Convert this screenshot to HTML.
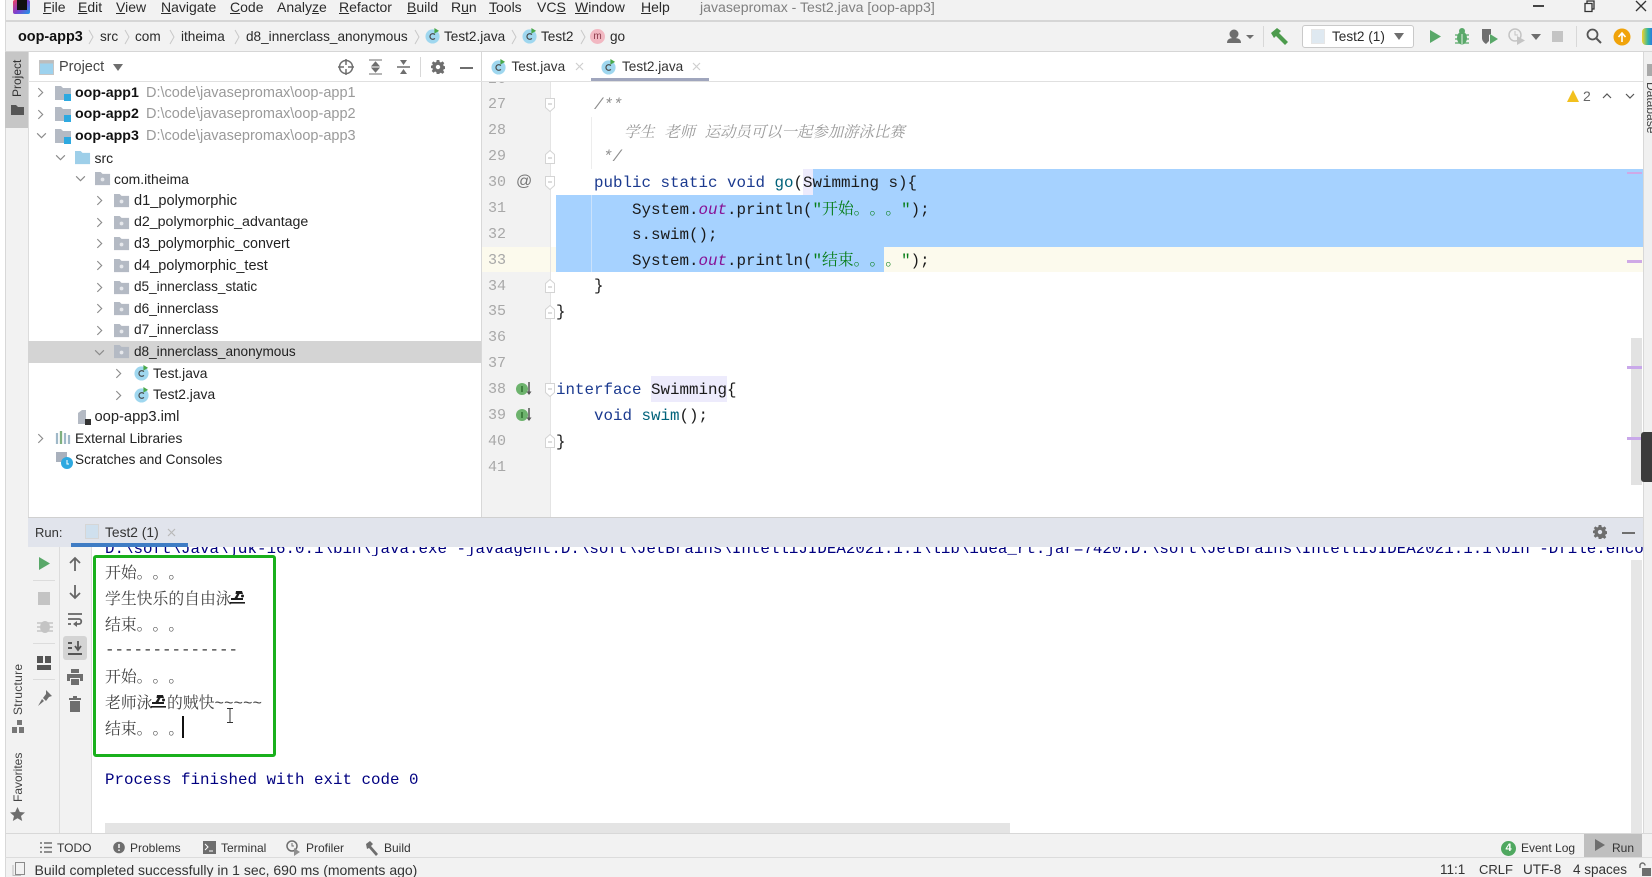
<!DOCTYPE html>
<html><head><meta charset="utf-8"><title>Test2.java</title>
<style>
html,body{margin:0;padding:0;width:1652px;height:877px;overflow:hidden;background:#fff}
#r{position:relative;width:1652px;height:877px;overflow:hidden;background:#fff;font-family:"Liberation Sans","Noto Sans CJK SC",sans-serif;color:#222;filter:blur(.35px);text-spacing-trim:space-all}
.a{position:absolute}
.t{position:absolute;white-space:pre;line-height:22px;font-size:14px;height:22px}
.m{position:absolute;top:-3px;white-space:pre;line-height:20px;font-size:14px;color:#2a2a2a}
.n{position:absolute;top:26px;white-space:pre;line-height:22px;font-size:13.6px;color:#2a2a2a}
.c{position:absolute;white-space:pre;font-family:"Liberation Mono","Noto Serif CJK SC",monospace;font-size:15.83px;line-height:26px;height:26px;color:#1a1a1a}
.ln{position:absolute;left:488px;font-family:"Liberation Mono",monospace;font-size:15px;line-height:26px;color:#a8a8a8}
.k{color:#1b3a8f}.f{color:#00627a}.o{color:#871094;font-style:italic}.s{color:#067d17}
.cn{font-family:"Noto Serif CJK SC","Liberation Mono",serif}
.con{position:absolute;left:105px;white-space:pre;font-family:"Liberation Mono","Noto Serif CJK SC",monospace;font-size:15.83px;line-height:26px;color:#444}
.b{position:absolute;white-space:pre;font-size:12px;line-height:18px;top:839px;color:#333}
.st{position:absolute;white-space:pre;font-size:13.5px;line-height:18px;top:860.5px;color:#333}
svg{position:absolute;overflow:visible}
.v{position:absolute;transform-origin:0 0;transform:rotate(-90deg);white-space:pre;font-size:12px;line-height:14px;color:#444}
.pa{color:#9a9a9a;font-size:14.5px;left:146px}
.bd{font-weight:bold;color:#111;font-size:14.2px;left:75px}
</style></head><body><div id="r">
<svg width="0" height="0" style="position:absolute"><defs>
<symbol id="mod" viewBox="0 0 17 17"><path d="M0 1h6l2 2h8v12H0z" fill="#b4bac4"/><rect x="9" y="9" width="7" height="7" fill="#2ea9e0"/></symbol>
<symbol id="src" viewBox="0 0 17 17"><path d="M0 1h6l2 2h8v12H0z" fill="#9ecfe9"/></symbol>
<symbol id="pk" viewBox="0 0 17 17"><path d="M0 1h6l2 2h8v12H0z" fill="#b4bac4"/><circle cx="8" cy="9" r="2" fill="#e6e8ec"/></symbol>
<symbol id="cl" viewBox="0 0 17 17"><circle cx="8" cy="9" r="7.500" fill="#9fd7ef"/><path d="M10.500 7a3 3 0 1 0 0 4" fill="none" stroke="#444" stroke-width="1.200"/><path d="M10 0v6l5-3z" fill="#4aa84a"/></symbol>
<symbol id="hat" viewBox="0 0 15 14"><path d="M6 1h6l1 3H9.500L7.500 8H13v2H1V8h3.500L7 4H5.500z" fill="#1d1d1d"/><circle cx="12.500" cy="6" r="1.500" fill="#1d1d1d"/><path d="M0 12h15v1.600H0z" fill="#1d1d1d"/></symbol>
<symbol id="gear" viewBox="0 0 16 16"><path d="M6.500 0h3l.4 2.200 1.400.6L13.200 1.500l2 2-1.300 1.900.6 1.400 2.200.4v3l-2.200.4-.6 1.400 1.300 1.900-2 2-1.900-1.300-1.400.6L9.500 16h-3l-.4-2.200-1.400-.6-1.900 1.300-2-2 1.300-1.900-.6-1.400L-.7 9.500v-3l2.200-.4.600-1.400L.8 3.500l2-2 1.900 1.300 1.400-.6zM8 5.500a2.500 2.500 0 1 0 0 5 2.500 2.500 0 0 0 0-5z" fill="#6e6e6e" fill-rule="evenodd"/></symbol>
<symbol id="fold" viewBox="0 0 10 14"><path d="M.5.500h9v9L5 13.500.5 9.500z" fill="#fff" stroke="#d4d4d4"/><path d="M3 6h4" stroke="#bbb"/></symbol>
<symbol id="foldb" viewBox="0 0 10 14"><path d="M.5 13.500h9v-9L5 .5.500 4.500z" fill="#fff" stroke="#d4d4d4"/><path d="M3 8h4" stroke="#bbb"/></symbol>
<symbol id="ch" viewBox="0 0 8 12"><path d="M1.500 1l5 5-5 5" fill="none" stroke="#8a8a8a" stroke-width="1.300"/></symbol>
<symbol id="chd" viewBox="0 0 12 8"><path d="M1 1.500l5 5 5-5" fill="none" stroke="#8a8a8a" stroke-width="1.300"/></symbol>
<symbol id="impl" viewBox="0 0 17 16"><circle cx="6" cy="8" r="6" fill="#6db36d"/><path d="M6 5v6" stroke="#2f6f2f" stroke-width="1.500"/><path d="M13 1v12" stroke="#555" stroke-width="1.500"/><path d="M10.500 10.500L13 14l2.500-3.500z" fill="#555"/></symbol>
</defs></svg>

<!-- base chrome -->
<div class="a" style="left:5px;top:0;width:1647px;height:52px;background:#f2f2f2"></div>
<div class="a" style="left:5px;top:20px;width:1647px;height:1.500px;background:#d6d6d6"></div>
<div class="a" style="left:5px;top:51px;width:1647px;height:1px;background:#d6d6d6"></div>
<div class="a" style="left:5px;top:0;width:1px;height:877px;background:#d8d8d8"></div>
<div class="a" style="left:6px;top:52px;width:22px;height:782px;background:#f2f2f2"></div>
<div class="a" style="left:5px;top:52px;width:23px;height:76px;background:#c6c6c6"></div>
<div class="a" style="left:28px;top:52px;width:1px;height:782px;background:#dcdcdc"></div>

<!-- logo -->
<div class="a" style="left:13px;top:0;width:17px;height:14px;background:linear-gradient(135deg,#f0425e,#7b3fd0 50%,#1e9be8);border-radius:2px"></div>
<div class="a" style="left:17px;top:0;width:10px;height:10px;background:#111"></div>

<!-- menu -->
<div class="m" style="left:43px"><u>F</u>ile</div>
<div class="m" style="left:78px"><u>E</u>dit</div>
<div class="m" style="left:116px"><u>V</u>iew</div>
<div class="m" style="left:161px"><u>N</u>avigate</div>
<div class="m" style="left:230px"><u>C</u>ode</div>
<div class="m" style="left:277px">Analy<u>z</u>e</div>
<div class="m" style="left:339px"><u>R</u>efactor</div>
<div class="m" style="left:407px"><u>B</u>uild</div>
<div class="m" style="left:451px">R<u>u</u>n</div>
<div class="m" style="left:489px"><u>T</u>ools</div>
<div class="m" style="left:537px">VC<u>S</u></div>
<div class="m" style="left:575px"><u>W</u>indow</div>
<div class="m" style="left:641px"><u>H</u>elp</div>
<div class="m" style="left:700px;color:#808080;font-size:14.1px">javasepromax - Test2.java [oop-app3]</div>

<!-- window controls -->
<div class="a" style="left:1533px;top:5px;width:11px;height:1.500px;background:#444"></div>
<svg style="left:1584px;top:0" width="12" height="12"><path d="M3 3V1h7v8H8M1 3.500h7v8H1z" fill="none" stroke="#333" stroke-width="1.300"/></svg>
<svg style="left:1635px;top:0" width="12" height="12"><path d="M1 1l10 10M11 1L1 11" stroke="#333" stroke-width="1.300"/></svg>

<!-- nav bar -->
<div class="n" style="left:18px;font-weight:bold;color:#111;font-size:14.4px">oop-app3</div>
<svg style="left:88px;top:29px" width="6" height="16"><path d="M1 1l4 7-4 7" fill="none" stroke="#c8c8c8"/></svg>
<div class="n" style="left:100px">src</div>
<svg style="left:124px;top:29px" width="6" height="16"><path d="M1 1l4 7-4 7" fill="none" stroke="#c8c8c8"/></svg>
<div class="n" style="left:135px">com</div>
<svg style="left:169px;top:29px" width="6" height="16"><path d="M1 1l4 7-4 7" fill="none" stroke="#c8c8c8"/></svg>
<div class="n" style="left:181px">itheima</div>
<svg style="left:234px;top:29px" width="6" height="16"><path d="M1 1l4 7-4 7" fill="none" stroke="#c8c8c8"/></svg>
<div class="n" style="left:246px">d8_innerclass_anonymous</div>
<svg style="left:414px;top:29px" width="6" height="16"><path d="M1 1l4 7-4 7" fill="none" stroke="#c8c8c8"/></svg>
<svg style="left:425px;top:28px" width="16" height="16"><use href="#cl"/></svg>
<div class="n" style="left:444px">Test2.java</div>
<svg style="left:511px;top:29px" width="6" height="16"><path d="M1 1l4 7-4 7" fill="none" stroke="#c8c8c8"/></svg>
<svg style="left:522px;top:28px" width="16" height="16"><use href="#cl"/></svg>
<div class="n" style="left:541px">Test2</div>
<svg style="left:580px;top:29px" width="6" height="16"><path d="M1 1l4 7-4 7" fill="none" stroke="#c8c8c8"/></svg>
<div class="a" style="left:590px;top:29px;width:15px;height:15px;border-radius:8px;background:#f2b8c2;color:#8a3a4a;font-size:10px;line-height:15px;text-align:center">m</div>
<div class="n" style="left:610px">go</div>

<!-- right toolbar -->
<svg style="left:1226px;top:29px" width="34" height="16"><circle cx="8" cy="5" r="4.500" fill="#6e6e6e"/><path d="M1 14c0-4 3-5 7-5s7 1 7 5z" fill="#6e6e6e"/><path d="M20 6h8l-4 4z" fill="#6e6e6e"/></svg>
<div class="a" style="left:1263px;top:26px;width:1px;height:21px;background:#d8d8d8"></div>
<svg style="left:1271px;top:27px" width="18" height="18"><path d="M0 6l6-5 4 3-2 2 9 9-3 3-9-9-2 2z" fill="#4c9b4c"/></svg>
<div class="a" style="left:1302px;top:25px;width:110px;height:21px;background:#fff;border:1px solid #c9c9c9;border-radius:3px"></div>
<div class="a" style="left:1311px;top:29px;width:14px;height:15px;background:#dfe9f1;border:1px solid #e6e6e6;box-sizing:border-box"></div>
<div class="n" style="left:1332px">Test2 (1)</div>
<svg style="left:1394px;top:33px" width="10" height="7"><path d="M0 0h10L5 7z" fill="#6e6e6e"/></svg>
<svg style="left:1429px;top:29px" width="13" height="15"><path d="M1 1l11 6.500L1 14z" fill="#59a869"/></svg>
<svg style="left:1455px;top:28px" width="14" height="17"><ellipse cx="7" cy="10" rx="5" ry="6.500" fill="#59a869"/><circle cx="7" cy="3" r="3" fill="#59a869"/><path d="M0 7h14M0 11h14M0 15h14" stroke="#59a869" stroke-width="1.300"/><path d="M7 6v10" stroke="#e4f0e4"/></svg>
<svg style="left:1481px;top:28px" width="18" height="18"><path d="M1 1h9v5l-2 1v6l-3 3c-3-2-4-4-4-6z" fill="#6e6e6e"/><path d="M9 6l8 5-8 5z" fill="#59a869"/></svg>
<svg style="left:1508px;top:28px" width="18" height="18"><circle cx="7" cy="7" r="6" fill="none" stroke="#c4c4c4" stroke-width="1.500"/><path d="M7 3v4h3" fill="none" stroke="#c4c4c4"/><path d="M9 8l8 4.500L9 17z" fill="#c4c4c4"/></svg>
<svg style="left:1531px;top:34px" width="10" height="6"><path d="M0 0h10L5 6z" fill="#6e6e6e"/></svg>
<div class="a" style="left:1552px;top:31px;width:11px;height:11px;background:#c4c4c4"></div>
<div class="a" style="left:1576px;top:26px;width:1px;height:21px;background:#d8d8d8"></div>
<svg style="left:1586px;top:28px" width="16" height="16"><circle cx="6.500" cy="6.500" r="5" fill="none" stroke="#555" stroke-width="1.800"/><path d="M10.500 10.500L15 15" stroke="#555" stroke-width="2"/></svg>
<svg style="left:1613px;top:28px" width="18" height="18"><circle cx="9" cy="9" r="8.500" fill="#f0a30a"/><path d="M9 14V6M5.500 9L9 5l3.500 4" fill="none" stroke="#fff" stroke-width="1.600"/></svg>
<div class="a" style="left:1642px;top:28px;width:10px;height:17px;background:linear-gradient(90deg,#f3d327,#2fb6a5 60%,#2a7be0);border-radius:4px 0 0 4px"></div>

<!-- project header -->
<svg style="left:39px;top:60px" width="15" height="15"><rect x=".5" y=".5" width="14" height="14" fill="#9dd2ee" stroke="#c5c5c5"/><rect x=".5" y=".5" width="14" height="3" fill="#bdbdbd"/></svg>
<div class="t" style="left:59px;top:56px;color:#444;font-size:14.5px">Project</div>
<svg style="left:113px;top:64px" width="10" height="7"><path d="M0 0h10L5 7z" fill="#6e6e6e"/></svg>
<svg style="left:338px;top:59px" width="16" height="16"><circle cx="8" cy="8" r="6.500" fill="none" stroke="#6e6e6e" stroke-width="1.500"/><path d="M8 0v6M8 10v6M0 8h6M10 8h6" stroke="#6e6e6e" stroke-width="1.500"/></svg>
<svg style="left:368px;top:59px" width="15" height="16"><path d="M1 1h13M1 15h13M7.500 3l3.500 4H4zM7.500 13l3.500-4H4z" fill="#6e6e6e" stroke="#6e6e6e"/></svg>
<svg style="left:396px;top:59px" width="15" height="16"><path d="M1 8h13" stroke="#6e6e6e" stroke-width="1.500"/><path d="M7.500 6l3.500-5H4zM7.500 10l3.500 5H4z" fill="#6e6e6e"/></svg>
<div class="a" style="left:420px;top:57px;width:1px;height:20px;background:#d8d8d8"></div>
<svg style="left:431px;top:60px" width="14" height="14" viewBox="0 0 16 16"><use href="#gear" width="16" height="16"/></svg>
<div class="a" style="left:460px;top:67px;width:13px;height:2px;background:#6e6e6e"></div>
<div class="a" style="left:28px;top:81px;width:453px;height:1px;background:#e0e0e0"></div>

<!-- tree -->
<div class="a" style="left:28px;top:341px;width:453px;height:21.500px;background:#d4d4d4"></div>
<svg style="left:37px;top:87px" width="7" height="11"><use href="#ch"/></svg><svg style="left:55px;top:85px" width="17" height="17"><use href="#mod"/></svg>
<div class="t bd" style="top:82px">oop-app1</div><div class="t pa" style="top:82px">D:\code\javasepromax\oop-app1</div>
<svg style="left:37px;top:109px" width="7" height="11"><use href="#ch"/></svg><svg style="left:55px;top:106px" width="17" height="17"><use href="#mod"/></svg>
<div class="t bd" style="top:103px">oop-app2</div><div class="t pa" style="top:103px">D:\code\javasepromax\oop-app2</div>
<svg style="left:36px;top:132px" width="11" height="7"><use href="#chd"/></svg><svg style="left:55px;top:128px" width="17" height="17"><use href="#mod"/></svg>
<div class="t bd" style="top:125px">oop-app3</div><div class="t pa" style="top:125px">D:\code\javasepromax\oop-app3</div>
<svg style="left:55px;top:154px" width="11" height="7"><use href="#chd"/></svg><svg style="left:75px;top:150px" width="16" height="16"><use href="#src"/></svg>
<div class="t" style="left:94.500px;top:147px">src</div>
<svg style="left:75px;top:175px" width="11" height="7"><use href="#chd"/></svg><svg style="left:95px;top:171px" width="16" height="16"><use href="#pk"/></svg>
<div class="t" style="left:114px;top:168px;font-size:13.9px">com.itheima</div>
<svg style="left:96px;top:195px" width="7" height="11"><use href="#ch"/></svg><svg style="left:114px;top:193px" width="16" height="16"><use href="#pk"/></svg>
<div class="t" style="left:134px;top:190px;font-size:14.6px">d1_polymorphic</div>
<svg style="left:96px;top:217px" width="7" height="11"><use href="#ch"/></svg><svg style="left:114px;top:215px" width="16" height="16"><use href="#pk"/></svg>
<div class="t" style="left:134px;top:211px;font-size:14.2px">d2_polymorphic_advantage</div>
<svg style="left:96px;top:238px" width="7" height="11"><use href="#ch"/></svg><svg style="left:114px;top:236px" width="16" height="16"><use href="#pk"/></svg>
<div class="t" style="left:134px;top:233px;font-size:14.3px">d3_polymorphic_convert</div>
<svg style="left:96px;top:260px" width="7" height="11"><use href="#ch"/></svg><svg style="left:114px;top:258px" width="16" height="16"><use href="#pk"/></svg>
<div class="t" style="left:134px;top:255px;font-size:14.5px">d4_polymorphic_test</div>
<svg style="left:96px;top:282px" width="7" height="11"><use href="#ch"/></svg><svg style="left:114px;top:280px" width="16" height="16"><use href="#pk"/></svg>
<div class="t" style="left:134px;top:276px;font-size:13.6px">d5_innerclass_static</div>
<svg style="left:96px;top:303px" width="7" height="11"><use href="#ch"/></svg><svg style="left:114px;top:301px" width="16" height="16"><use href="#pk"/></svg>
<div class="t" style="left:134px;top:298px;font-size:13.7px">d6_innerclass</div>
<svg style="left:96px;top:325px" width="7" height="11"><use href="#ch"/></svg><svg style="left:114px;top:323px" width="16" height="16"><use href="#pk"/></svg>
<div class="t" style="left:134px;top:319px;font-size:13.7px">d7_innerclass</div>
<svg style="left:94px;top:349px" width="11" height="7"><use href="#chd"/></svg><svg style="left:114px;top:344px" width="16" height="16"><use href="#pk"/></svg>
<div class="t" style="left:134px;top:341px;font-size:13.6px">d8_innerclass_anonymous</div>
<svg style="left:115px;top:368px" width="7" height="11"><use href="#ch"/></svg><svg style="left:134px;top:365px" width="16" height="16"><use href="#cl"/></svg>
<div class="t" style="left:153px;top:363px;font-size:13.8px">Test.java</div>
<svg style="left:115px;top:390px" width="7" height="11"><use href="#ch"/></svg><svg style="left:134px;top:387px" width="16" height="16"><use href="#cl"/></svg>
<div class="t" style="left:153px;top:384px;font-size:13.8px">Test2.java</div>
<svg style="left:76px;top:409px" width="16" height="16"><path d="M2 4l4-3h4v14H2z" fill="#b4bac4"/><rect x="9" y="10" width="6" height="6" fill="#333"/></svg>
<div class="t" style="left:94.500px;top:406px;font-size:14.7px">oop-app3.iml</div>
<svg style="left:37px;top:433px" width="7" height="11"><use href="#ch"/></svg><svg style="left:56px;top:430px" width="16" height="16"><path d="M1 3v11M5 1v13M9 3v11M13 5v9" stroke-width="2.200" stroke="#9fb8c8"/><path d="M5 1v13" stroke="#7fb07f" stroke-width="2.200"/></svg>
<div class="t" style="left:75px;top:428px;font-size:13.8px">External Libraries</div>
<svg style="left:56px;top:452px" width="17" height="17"><rect x="0" y="0" width="11" height="10" fill="#a9b1bd"/><circle cx="11" cy="11" r="6" fill="#2ea9e0"/><path d="M11 8v4h2" stroke="#fff" fill="none"/></svg>
<div class="t" style="left:75px;top:449px;font-size:13.6px">Scratches and Consoles</div>

<!-- editor tabs -->
<div class="a" style="left:481px;top:52px;width:1px;height:465px;background:#d8d8d8"></div>
<svg style="left:491px;top:59px" width="16" height="16"><use href="#cl"/></svg>
<div class="t" style="left:511.500px;top:56px;color:#333;font-size:13.6px">Test.java</div>
<svg style="left:575px;top:62px" width="9" height="9"><path d="M1 1l7 7M8 1L1 8" stroke="#cfcfcf" stroke-width="1.200"/></svg>
<div class="a" style="left:591px;top:52px;width:118px;height:29px;background:#fff"></div>
<div class="a" style="left:591px;top:78px;width:118px;height:3px;background:#a0a6bd"></div>
<svg style="left:601px;top:59px" width="16" height="16"><use href="#cl"/></svg>
<div class="t" style="left:622px;top:56px;color:#333;font-size:13.6px">Test2.java</div>
<svg style="left:692px;top:62px" width="9" height="9"><path d="M1 1l7 7M8 1L1 8" stroke="#cfcfcf" stroke-width="1.200"/></svg>
<div class="a" style="left:481px;top:81px;width:1162px;height:1px;background:#e0e0e0"></div>

<!-- gutter -->
<div class="a" style="left:482px;top:82px;width:68px;height:435px;background:#f2f2f2"></div>
<div class="a" style="left:550px;top:82px;width:1px;height:435px;background:#e4e4e4"></div>
<div class="a" style="left:482px;top:247px;width:68px;height:25px;background:#fcfaed"></div>
<div class="a" style="left:551px;top:247px;width:1092px;height:25px;background:#fcfaed"></div>
<div class="a" style="left:803px;top:169px;width:10px;height:26px;background:#edebfc"></div>
<div class="a" style="left:813px;top:169px;width:830px;height:26px;background:#a6d2ff"></div>
<div class="a" style="left:556px;top:195px;width:1087px;height:52px;background:#a6d2ff"></div>
<div class="a" style="left:556px;top:247px;width:328px;height:25px;background:#a6d2ff"></div>
<div class="a" style="left:591px;top:117px;width:1px;height:52px;background:#ededed"></div>
<div class="a" style="left:591px;top:195px;width:1px;height:77px;background:#cbe2fb"></div>
<div class="a" style="left:651px;top:376px;width:76px;height:26px;background:#edebfc"></div>

<div class="a" style="left:482px;top:82px;width:68px;height:7px;overflow:hidden"><div class="ln" style="left:6px;top:-15px">26</div></div>
<div class="ln" style="top:92px">27</div><div class="ln" style="top:118px">28</div><div class="ln" style="top:144px">29</div><div class="ln" style="top:170px">30</div><div class="ln" style="top:196px">31</div><div class="ln" style="top:222px">32</div><div class="ln" style="top:248px">33</div><div class="ln" style="top:274px">34</div><div class="ln" style="top:299px">35</div><div class="ln" style="top:325px">36</div><div class="ln" style="top:351px">37</div><div class="ln" style="top:377px">38</div><div class="ln" style="top:403px">39</div><div class="ln" style="top:429px">40</div><div class="ln" style="top:455px">41</div>
<div class="a" style="left:516px;top:172px;font-size:16px;line-height:20px;color:#777">@</div>
<svg style="left:516px;top:381px" width="17" height="16"><use href="#impl"/></svg>
<svg style="left:516px;top:407px" width="17" height="16"><use href="#impl"/></svg>
<svg style="left:545px;top:98px" width="10" height="14"><use href="#fold"/></svg>
<svg style="left:545px;top:150px" width="10" height="14"><use href="#foldb"/></svg>
<svg style="left:545px;top:176px" width="10" height="14"><use href="#fold"/></svg>
<svg style="left:545px;top:279px" width="10" height="14"><use href="#foldb"/></svg>
<svg style="left:545px;top:305px" width="10" height="14"><use href="#foldb"/></svg>
<svg style="left:545px;top:383px" width="10" height="14"><use href="#fold"/></svg>
<svg style="left:545px;top:434px" width="10" height="14"><use href="#foldb"/></svg>

<!-- code -->
<div class="c" style="left:594px;top:92px;color:#8c8c8c;font-style:italic">/**</div>
<div class="c" style="left:624px;top:118px;color:#9a9a9a;font-style:italic"><span class="cn" style="font-size:15.4px">学生</span> <span class="cn" style="font-size:15.4px">老师</span> <span class="cn" style="font-size:15.4px">运动员可以一起参加游泳比赛</span></div>
<div class="c" style="left:603px;top:144px;color:#8c8c8c;font-style:italic">*/</div>
<div class="c" style="left:594px;top:170px"><span class="k">public static void</span> <span class="f">go</span>(Swimming s){</div>
<div class="c" style="left:632px;top:195px">System.<span class="o">out</span>.println(<span class="s">"<span class="cn">开始。。。</span>"</span>);</div>
<div class="c" style="left:632px;top:222px">s.swim();</div>
<div class="c" style="left:632px;top:246px">System.<span class="o">out</span>.println(<span class="s">"<span class="cn">结束。。。</span>"</span>);</div>
<div class="c" style="left:594px;top:273px">}</div>
<div class="c" style="left:556px;top:299px">}</div>
<div class="c" style="left:556px;top:377px"><span class="k">interface</span> Swimming{</div>
<div class="c" style="left:594px;top:403px"><span class="k">void</span> <span class="f">swim</span>();</div>
<div class="c" style="left:556px;top:429px">}</div>

<!-- inspections -->
<svg style="left:1567px;top:90px" width="12" height="12"><path d="M6 0l6 12H0z" fill="#f2c01e"/></svg>
<div class="a" style="left:1583px;top:88px;font-size:14px;line-height:16px;color:#666">2</div>
<svg style="left:1602px;top:93px" width="10" height="6"><path d="M1 5l4-4 4 4" fill="none" stroke="#555" stroke-width="1.200"/></svg>
<svg style="left:1625px;top:93px" width="10" height="6"><path d="M1 1l4 4 4-4" fill="none" stroke="#555" stroke-width="1.200"/></svg>

<!-- editor scrollbar -->
<div class="a" style="left:1631px;top:338px;width:11px;height:147px;background:#e2e2e2"></div>
<div class="a" style="left:1627px;top:171.500px;width:15px;height:2.500px;background:#cfa9e6"></div>
<div class="a" style="left:1627px;top:260px;width:15px;height:2.500px;background:#cfa9e6"></div>
<div class="a" style="left:1627px;top:366px;width:15px;height:2.500px;background:#c9a8ea"></div>
<div class="a" style="left:1627px;top:437px;width:15px;height:2.500px;background:#c9a8ea"></div>

<!-- right strip -->
<div class="a" style="left:1643px;top:52px;width:9px;height:782px;background:#f0f0f0;border-left:1px solid #d8d8d8;box-sizing:border-box"></div>
<div class="a" style="left:1641px;top:432px;width:11px;height:50px;background:#3c3c3c;border-radius:3px 0 0 3px"></div>
<div class="a" style="left:1657px;top:82px;transform-origin:0 0;transform:rotate(90deg);font-size:12px;line-height:12px;white-space:pre;color:#444">Database</div>
<div class="a" style="left:1647px;top:64px;width:5px;height:12px;background:#a9a9a9"></div>

<!-- left strip labels -->
<div class="v" style="left:10px;top:97px;color:#333">Project</div>
<svg style="left:11px;top:105px" width="13" height="10"><path d="M0 0h5l2 2h6v8H0z" fill="#555"/></svg>
<div class="v" style="left:11px;top:715px;letter-spacing:.3px">Structure</div>
<svg style="left:12px;top:720px" width="12" height="13"><rect x="5" y="0" width="5" height="5" fill="#777"/><rect x="0" y="7" width="5" height="6" fill="#777"/><rect x="7" y="7" width="5" height="6" fill="#777"/></svg>
<div class="v" style="left:11px;top:802px">Favorites</div>
<svg style="left:10px;top:807px" width="15" height="14"><path d="M7.500 0l2.300 5 5.200.5-4 3.500 1.200 5-4.700-2.800L2.800 14 4 9 0 5.500 5.200 5z" fill="#6e6e6e"/></svg>

<!-- run header -->
<div class="a" style="left:28px;top:517px;width:1615px;height:30px;background:#e1e4ec;border-top:1px solid #d0d0d0;box-sizing:border-box"></div>
<div class="t" style="left:35px;top:522px;font-size:13px;color:#333">Run:</div>
<div class="a" style="left:85px;top:524px;width:14px;height:15px;background:#cfe0ee;border:1px solid #d6d6d6;box-sizing:border-box"></div>
<div class="t" style="left:105px;top:522px;font-size:13.800px;color:#333">Test2 (1)</div>
<svg style="left:167px;top:528px" width="9" height="9"><path d="M1 1l7 7M8 1L1 8" stroke="#b9b9b9" stroke-width="1.200"/></svg>
<div class="a" style="left:71px;top:543px;width:117px;height:4px;background:#3f7cc4"></div>
<svg style="left:1593px;top:525px" width="14" height="14" viewBox="0 0 16 16"><use href="#gear" width="16" height="16"/></svg>
<div class="a" style="left:1622px;top:532px;width:13px;height:2px;background:#6e6e6e"></div>

<!-- console -->
<div class="a" style="left:28px;top:547px;width:31px;height:287px;background:#f2f2f2"></div>
<div class="a" style="left:59px;top:547px;width:1px;height:287px;background:#dcdcdc"></div>
<div class="a" style="left:60px;top:547px;width:31px;height:287px;background:#f2f2f2"></div>
<div class="a" style="left:91px;top:547px;width:1px;height:287px;background:#dcdcdc"></div>
<div class="a" style="left:92px;top:547px;width:1551px;height:9px;overflow:hidden"><div class="con" style="left:13px;top:-11px;color:#000080">D:\soft\Java\jdk-16.0.1\bin\java.exe -javaagent:D:\soft\JetBrains\IntelliJIDEA2021.1.1\lib\idea_rt.jar=7420:D:\soft\JetBrains\IntelliJIDEA2021.1.1\bin -Dfile.encoding=UTF-8 -classpath</div></div>
<div class="a" style="left:1631px;top:560px;width:11px;height:273px;background:#e6e6e6"></div>
<div class="a" style="left:105px;top:823px;width:905px;height:10px;background:#e4e4e4"></div>

<svg style="left:38px;top:556px" width="13" height="15"><path d="M1 1l11 6.500L1 14z" fill="#59a869"/></svg>
<div class="a" style="left:33px;top:580px;width:22px;height:1px;background:#dcdcdc"></div>
<div class="a" style="left:38px;top:592px;width:12px;height:13px;background:#c4c4c4"></div>
<svg style="left:37px;top:618px" width="16" height="17"><ellipse cx="8" cy="9" rx="5" ry="6" fill="#c4c4c4"/><path d="M0 5h16M0 9h16M0 13h16" stroke="#c4c4c4" stroke-width="1.500"/></svg>
<div class="a" style="left:33px;top:643px;width:22px;height:1px;background:#dcdcdc"></div>
<svg style="left:37px;top:656px" width="14" height="14"><path d="M0 0h6v7H0zM8 0h6v7H8zM0 9h14v5H0z" fill="#555"/></svg>
<div class="a" style="left:33px;top:679px;width:22px;height:1px;background:#dcdcdc"></div>
<svg style="left:37px;top:690px" width="15" height="16"><path d="M9 0l6 6-3 1-3 4-3-3 3-4zM5 9l2 2-6 5z" fill="#6e6e6e"/></svg>

<svg style="left:68px;top:556px" width="14" height="16"><path d="M7 15V2M2 7l5-5 5 5" fill="none" stroke="#666" stroke-width="1.800"/></svg>
<svg style="left:68px;top:584px" width="14" height="16"><path d="M7 1v13M2 9l5 5 5-5" fill="none" stroke="#666" stroke-width="1.800"/></svg>
<svg style="left:67px;top:612px" width="16" height="16"><path d="M1 2h14M1 7h11c3 0 3 5 0 5H9M1 12h3" fill="none" stroke="#666" stroke-width="1.800"/><path d="M10 9v6l-4-3z" fill="#666"/></svg>
<div class="a" style="left:63px;top:636px;width:24px;height:24px;background:#d4d4d4;border-radius:3px"></div>
<svg style="left:67px;top:640px" width="16" height="16"><path d="M1 3h4M1 8h4M1 14h14" stroke="#555" stroke-width="2"/><path d="M11 1v8M8 6l3 4 3-4" fill="none" stroke="#555" stroke-width="1.800"/></svg>
<svg style="left:67px;top:669px" width="16" height="16"><path d="M4 0h8v4H4zM0 5h16v7h-3V9H3v3H0zM4 10h8v6H4z" fill="#6e6e6e"/></svg>
<svg style="left:69px;top:696px" width="12" height="16"><path d="M4 0h4v2h4v2H0V2h4zM1 5h10v11H1z" fill="#6e6e6e"/></svg>

<div class="con" style="top:559px"><span class="cn">开始。。。</span></div>
<div class="con" style="top:585px"><span class="cn">学生快乐的自由泳</span></div>
<svg style="left:230px;top:590px" width="15" height="14"><use href="#hat"/></svg>
<div class="con" style="top:611px"><span class="cn">结束。。。</span></div>
<div class="con" style="top:637px;color:#333">--------------</div>
<div class="con" style="top:663px"><span class="cn">开始。。。</span></div>
<div class="con" style="top:689px"><span class="cn">老师泳</span></div>
<svg style="left:151px;top:694px" width="15" height="14"><use href="#hat"/></svg>
<div class="con" style="left:167px;top:689px"><span class="cn">的贼快</span>~~~~~</div>
<div class="con" style="top:715px"><span class="cn">结束。。。</span></div>
<div class="a" style="left:182px;top:716px;width:2px;height:22px;background:#111"></div>
<svg style="left:226px;top:708px" width="8" height="15"><path d="M1 .5h6M1 14.500h6M4 .5v14" stroke="#333" fill="none"/></svg>
<div class="a" style="left:93px;top:555px;width:183px;height:202px;border:3px solid #19b01c;border-radius:3px;box-sizing:border-box"></div>
<div class="con" style="top:767px;color:#000080">Process finished with exit code 0</div>

<!-- bottom bars -->
<div class="a" style="left:6px;top:834px;width:1646px;height:43px;background:#f2f2f2"></div>
<div class="a" style="left:5px;top:833px;width:1647px;height:1px;background:#d8d8d8"></div>
<div class="a" style="left:5px;top:857px;width:1647px;height:1px;background:#dcdcdc"></div>
<svg style="left:40px;top:842px" width="12" height="11"><path d="M0 1h2M4 1h8M0 5.500h2M4 5.500h8M0 10h2M4 10h8" stroke="#6e6e6e" stroke-width="1.600"/></svg>
<div class="b" style="left:57px">TODO</div>
<svg style="left:113px;top:841px" width="12" height="13"><circle cx="6" cy="6.500" r="5.800" fill="#6e6e6e"/><path d="M6 3v4M6 8.500v1.500" stroke="#fff" stroke-width="1.400"/></svg>
<div class="b" style="left:130px">Problems</div>
<svg style="left:203px;top:841px" width="13" height="13"><rect width="13" height="13" fill="#6e6e6e"/><path d="M2 3l3 3-3 3M6 10h4" stroke="#fff" fill="none"/></svg>
<div class="b" style="left:221px">Terminal</div>
<svg style="left:286px;top:840px" width="15" height="16"><circle cx="6" cy="6" r="5" fill="none" stroke="#6e6e6e" stroke-width="1.500"/><path d="M6 3v3h2" fill="none" stroke="#6e6e6e"/><path d="M8 8l6 4-6 4z" fill="#8f8f8f"/></svg>
<div class="b" style="left:306px">Profiler</div>
<svg style="left:365px;top:840px" width="15" height="16"><path d="M1 4l4-3 3 3-2 2 7 8-2 2-7-8-2 1z" fill="#6e6e6e"/></svg>
<div class="b" style="left:384px">Build</div>
<div class="a" style="left:1501px;top:841px;width:15px;height:15px;border-radius:8px;background:#4fa860;color:#fff;font-size:11px;line-height:15px;text-align:center;font-weight:bold">4</div>
<div class="b" style="left:1521px">Event Log</div>
<div class="a" style="left:1584px;top:834px;width:58px;height:23px;background:#bfbfbf"></div>
<svg style="left:1595px;top:839px" width="10" height="12"><path d="M0 0l10 6-10 6z" fill="#6e6e6e"/></svg>
<div class="b" style="left:1612px">Run</div>

<svg style="left:12px;top:862px" width="14" height="14"><rect x="3.500" y=".5" width="9" height="12" fill="none" stroke="#8a8a8a"/><path d="M1 3v10.500h8" fill="none" stroke="#bdbdbd"/></svg>
<div class="st" style="left:34.500px;font-size:14px">Build completed successfully in 1 sec, 690 ms (moments ago)</div>
<div class="st" style="left:1440px">11:1</div>
<div class="st" style="left:1479px;font-size:13px">CRLF</div>
<div class="st" style="left:1523px">UTF-8</div>
<div class="st" style="left:1573px">4 spaces</div>
<svg style="left:1638px;top:862px" width="14" height="14"><path d="M2 6V3.500a2.500 2.500 0 0 1 5 0" fill="none" stroke="#6e6e6e" stroke-width="1.400"/><rect x="4" y="6" width="9" height="8" fill="#6e6e6e"/></svg>
</div></body></html>
